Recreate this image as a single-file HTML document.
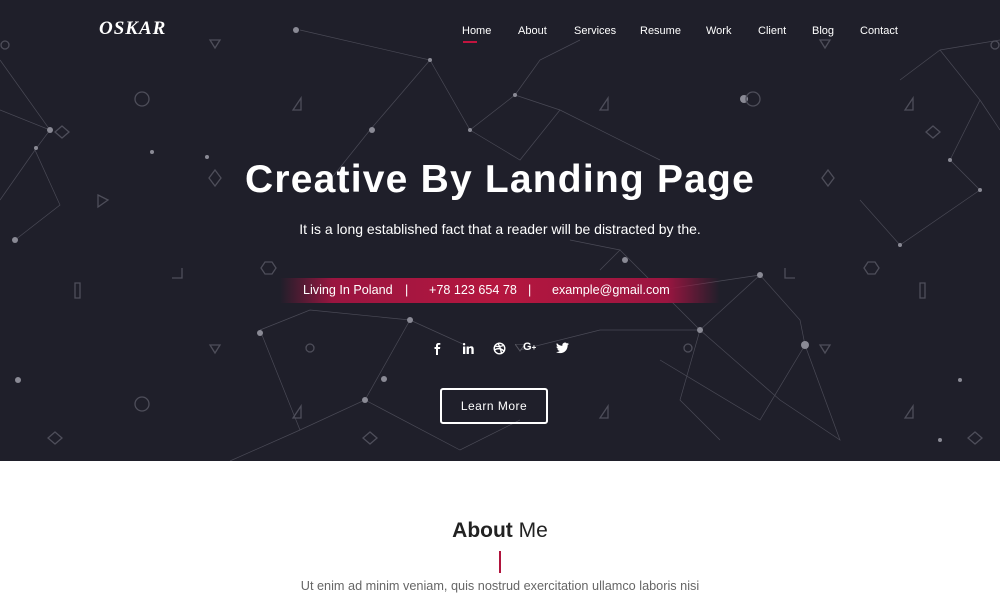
<!DOCTYPE html>
<html><head><meta charset="utf-8"><style>
*{margin:0;padding:0;box-sizing:border-box}
body{width:1000px;height:600px;overflow:hidden;background:#fff;font-family:"Liberation Sans",sans-serif}
.hero{position:relative;width:1000px;height:461px;background:#1f1f2a;overflow:hidden}
.hero svg.bg{position:absolute;left:0;top:0}
.logo{position:absolute;left:99px;top:18px;color:#fff;font:italic bold 19px "Liberation Serif",serif;letter-spacing:1px}
.nav{position:absolute;top:25px;font-size:11px;color:#fff}
.nav span{position:absolute;white-space:nowrap}
.ul{position:absolute;left:463px;top:41px;width:14px;height:2px;background:#c2143f}
h1{position:absolute;top:158px;width:1000px;text-align:center;color:#fff;font-size:39px;font-weight:bold;letter-spacing:1.2px}
.sub{position:absolute;top:221px;width:1000px;text-align:center;color:#fff;font-size:14px}
.strip{position:absolute;left:280px;top:278px;width:440px;height:25px;background:linear-gradient(90deg,rgba(150,20,60,0),#9a1540 12%,#b5173f 50%,#9a1540 88%,rgba(150,20,60,0));color:#fff;font-size:12.6px;line-height:25px}
.strip span{position:absolute;white-space:nowrap}
.btn{position:absolute;left:440px;top:388px;width:108px;height:36px;border:2px solid #fff;border-radius:3px;color:#fff;font-size:12px;text-align:center;line-height:32px;letter-spacing:.5px}
.ico{position:absolute;top:342px}
h2{position:absolute;top:519px;width:1000px;text-align:center;font-size:21px;color:#222;font-weight:bold}
h2 b{font-weight:normal}
.bar{position:absolute;left:499px;top:551px;width:2px;height:22px;background:#b0143d}
.p{position:absolute;top:579px;width:1000px;text-align:center;font-size:12.7px;color:#666}
</style></head><body>
<div class="hero">
<svg class="bg" width="1000" height="461" stroke="#5a5a66" stroke-width="0.7" fill="none">
<g stroke="#4a4a56">
<path d="M300 30 L430 60 L470 130 L515 95 L540 60 L580 40 M430 60 L370 130 L330 180 M470 130 L520 160 L560 110 L660 160 M515 95 L560 110"/>
<path d="M0 60 L50 130 L35 150 L60 205 L15 240 M50 130 L0 110 M35 150 L0 200"/>
<path d="M900 80 L940 50 L980 100 L950 160 L980 190 L900 245 L860 200 M940 50 L1000 40 M980 100 L1000 130"/>
<path d="M260 330 L310 310 L410 320 L465 345 M260 330 L300 430 L365 400 L410 320 M365 400 L460 450 L520 420 M300 430 L230 461"/>
<path d="M620 250 L660 290 L700 330 L760 275 L800 320 L805 345 L840 440 L780 400 L700 330 M660 290 L760 275 M805 345 L760 420 L660 360 M700 330 L680 400 L720 440"/>
<path d="M600 270 L620 250 L570 240 M700 330 L600 330 L520 350"/>
</g>
<g fill="#8a8a95" stroke="none">
<circle cx="296" cy="30" r="3"/><circle cx="430" cy="60" r="2"/><circle cx="470" cy="130" r="2"/><circle cx="515" cy="95" r="2"/><circle cx="372" cy="130" r="3"/><circle cx="744" cy="99" r="4"/><circle cx="50" cy="130" r="3"/><circle cx="36" cy="148" r="2"/><circle cx="15" cy="240" r="3"/><circle cx="260" cy="333" r="3"/><circle cx="410" cy="320" r="3"/><circle cx="365" cy="400" r="3"/><circle cx="384" cy="379" r="3"/><circle cx="760" cy="275" r="3"/><circle cx="805" cy="345" r="4"/><circle cx="700" cy="330" r="3"/><circle cx="660" cy="290" r="2"/><circle cx="625" cy="260" r="3"/><circle cx="940" cy="440" r="2"/><circle cx="960" cy="380" r="2"/><circle cx="900" cy="245" r="2"/><circle cx="980" cy="190" r="2"/><circle cx="950" cy="160" r="2"/><circle cx="18" cy="380" r="3"/><circle cx="207" cy="157" r="2"/><circle cx="152" cy="152" r="2"/></g>
<g stroke="#4e4e5a" stroke-width="1.3">
<circle cx="142" cy="99" r="7"/><circle cx="753" cy="99" r="7"/><circle cx="142" cy="404" r="7"/><circle cx="310" cy="348" r="4"/><circle cx="688" cy="348" r="4"/><circle cx="5" cy="45" r="4"/><circle cx="995" cy="45" r="4"/>
<path d="M210 40 L220 40 L215 48Z M820 40 L830 40 L825 48Z M210 345 L220 345 L215 353Z M820 345 L830 345 L825 353Z"/>
<path d="M55 432 L62 438 L55 444 L48 438Z M975 432 L982 438 L975 444 L968 438Z M370 432 L377 438 L370 444 L363 438Z M62 126 L69 132 L62 138 L55 132Z M933 126 L940 132 L933 138 L926 132Z"/>
<path d="M215 170 L221 178 L215 186 L209 178Z M828 170 L834 178 L828 186 L822 178Z M98 195 L108 200 L98 207Z M265 262 L272 262 L276 268 L272 274 L265 274 L261 268Z M868 262 L875 262 L879 268 L875 274 L868 274 L864 268Z"/>
<path d="M172 278 L182 278 L182 268 M795 278 L785 278 L785 268 M75 283 L80 283 L80 298 L75 298Z M920 283 L925 283 L925 298 L920 298Z"/>
<path d="M293 110 L301 98 L301 110Z M600 110 L608 98 L608 110Z M293 418 L301 406 L301 418Z M600 418 L608 406 L608 418Z M905 418 L913 406 L913 418Z M905 110 L913 98 L913 110Z"/>
</g>
</svg>
<div class="logo">OSKAR</div>
<div class="nav"><span style="left:462px">Home</span><span style="left:518px">About</span><span style="left:574px">Services</span><span style="left:640px">Resume</span><span style="left:706px">Work</span><span style="left:758px">Client</span><span style="left:812px">Blog</span><span style="left:860px">Contact</span></div>
<div class="ul"></div>
<h1>Creative By Landing Page</h1>
<div class="sub">It is a long established fact that a reader will be distracted by the.</div>
<div class="strip"><span style="left:23px">Living In Poland</span><span style="left:125px">|</span><span style="left:149px">+78 123 654 78</span><span style="left:248px">|</span><span style="left:272px">example@gmail.com</span></div>
<svg class="ico" style="left:432px" width="10" height="13" viewBox="0 0 10 13"><path fill="#fff" d="M6 13V7h2l.3-2H6V3.8c0-.6.2-1 1-1h1.3V1H6.5C4.8 1 4 2 4 3.5V5H2.5v2H4v6z"/></svg>
<svg class="ico" style="left:462px" width="13" height="13" viewBox="0 0 13 13"><path fill="#fff" d="M1 4.5h2.3V12H1zM2.1 1a1.2 1.2 0 110 2.4 1.2 1.2 0 010-2.4zM4.6 4.5h2.2v1c.4-.7 1.2-1.2 2.3-1.2 2.2 0 2.6 1.4 2.6 3.3V12H9.4V8c0-.9 0-2-1.2-2S6.9 7 6.9 8v4H4.6z"/></svg>
<svg class="ico" style="left:493px" width="13" height="13" viewBox="0 0 13 13" fill="none" stroke="#fff" stroke-width="1.4"><circle cx="6.5" cy="6.5" r="5.3"/><path d="M2 4c3 1 7 .5 9-1M1.5 8c3-2 6-2 9.5 1M5 1.5c2 3 3 7 3.5 10"/></svg>
<svg class="ico" style="left:515px;top:344px" width="10" height="8"><path d="M0 0L10 0 5 7Z" fill="none" stroke="#55555f"/></svg>
<div class="ico" style="left:523px;top:341px;color:#fff;font-size:11px;font-weight:bold">G<span style="font-size:8px">+</span></div>
<svg class="ico" style="left:556px" width="13" height="12" viewBox="0 0 24 20"><path fill="#fff" d="M24 2.4a10 10 0 01-2.8.8A5 5 0 0023.3.4a10 10 0 01-3.1 1.2A4.9 4.9 0 0011.8 6 14 14 0 011.7.9a4.9 4.9 0 001.5 6.6A4.9 4.9 0 01.9 6.9a4.9 4.9 0 003.9 4.9 5 5 0 01-2.2.1 4.9 4.9 0 004.6 3.4A9.9 9.9 0 010 17.3 14 14 0 007.5 19.5c9 0 14-7.5 14-14v-.6A10 10 0 0024 2.4z"/></svg>
<div class="btn">Learn More</div>
</div>
<h2>About <b>Me</b></h2>
<div class="bar"></div>
<div class="p">Ut enim ad minim veniam, quis nostrud exercitation ullamco laboris nisi</div>
</body></html>
